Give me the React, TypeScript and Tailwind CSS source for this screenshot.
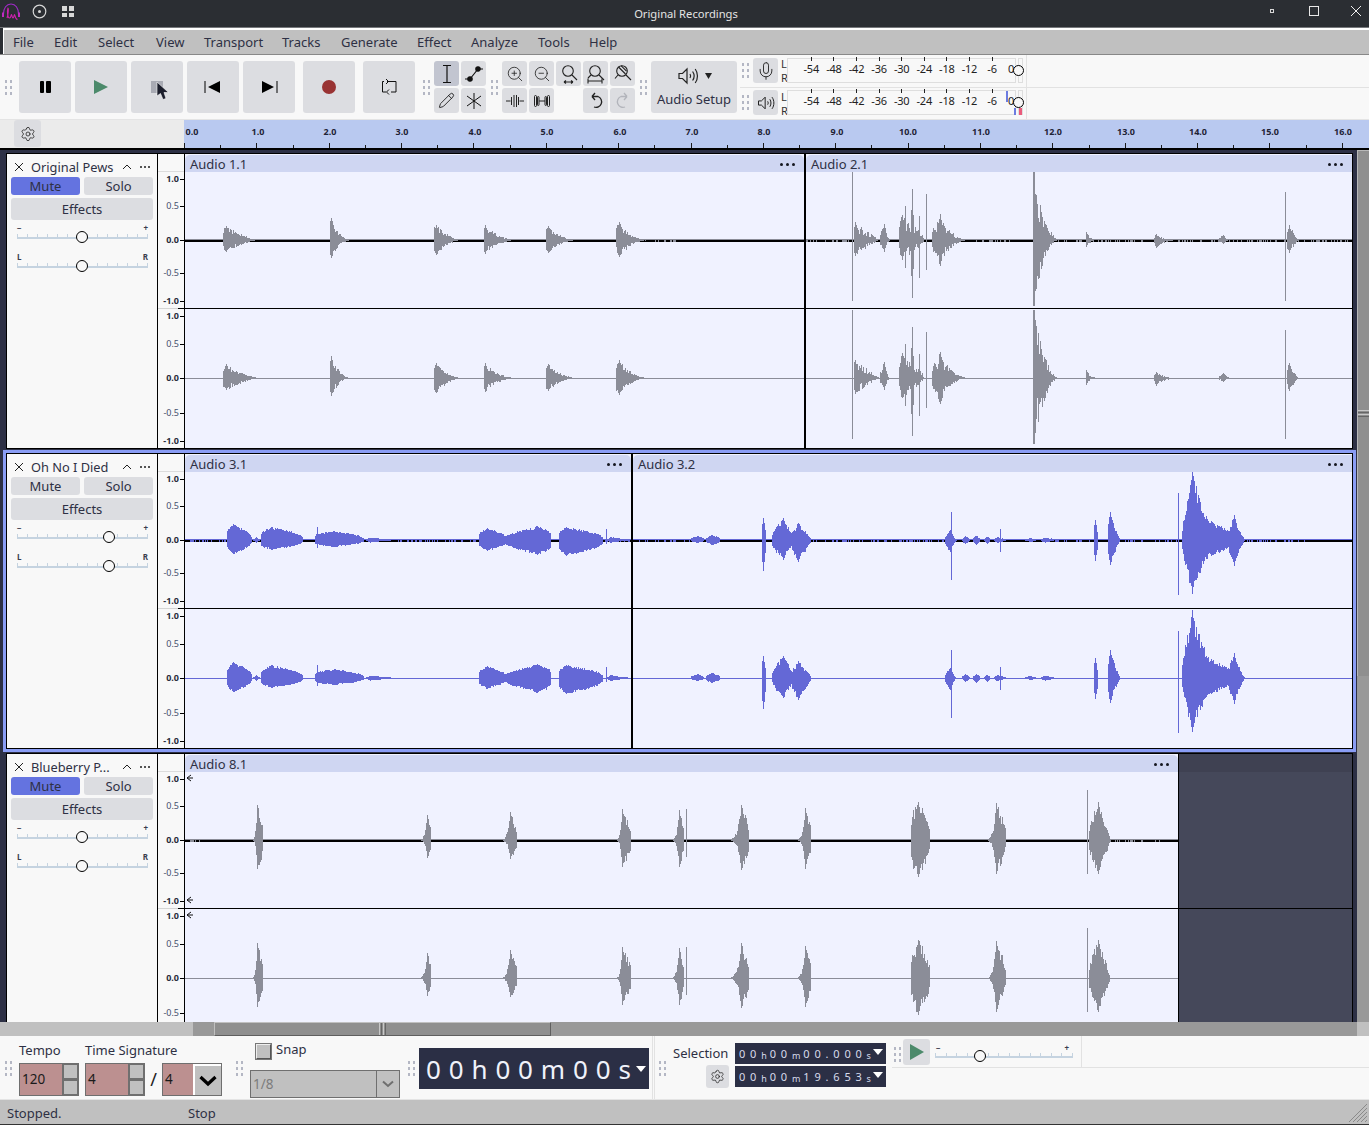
import { Settings, ZoomIn, ZoomOut, Mic, Pencil } from "lucide-react";

type Burst = [number, number, number, number, number, number?, number?];

const GRAY = "#8b8d98";
const BLUE = "#6468d6";

function rnd(n: number) {
  const v = Math.sin(n * 12.9898) * 43758.5453;
  return v - Math.floor(v);
}

function columns(bursts: Burst[], x0: number, x1: number, seed: number, jit: number) {
  let d = "";
  for (let x = x0; x < x1; x++) {
    let up = 0;
    let down = 0;
    for (const [a, p, b, u, dn, pa = 0.5, pd = 1.5] of bursts) {
      if (x < a || x > b) continue;
      let t = 1;
      if (x < p) t = Math.pow((x - a) / (p - a), pa);
      if (x > p) t = Math.pow((b - x) / (b - p), pd);
      // the peak column keeps its full height, the rest gets ragged
      const near = Math.min(1, Math.abs(x - p) / 3);
      const ju = 1 - jit * near * rnd(x * seed + 3);
      const jd = 1 - jit * near * rnd(x * seed + 7);
      up = Math.max(up, u * t * ju);
      down = Math.max(down, dn * t * jd);
    }
    if (up + down > 0.6) d += `M${x + 0.5} ${(-up).toFixed(1)}V${down.toFixed(1)}`;
  }
  return d;
}

function noiseTicks(ranges: [number, number][], seed: number) {
  let d = "";
  for (const [a, b] of ranges) {
    for (let x = a; x < b; x++) {
      if (rnd(x * seed) > 0.66) d += `M${x + 0.5} -1.5V1.5`;
    }
  }
  return d;
}

function Wave(props: {
  x0: number;
  x1: number;
  h: number;
  cy: number;
  color: string;
  bursts: Burst[];
  noise: [number, number][];
  thick: boolean;
  seed: number;
  jit: number;
  arrows?: number[];
}) {
  const { x0, x1, h, cy, color, bursts, noise, thick, seed, jit, arrows } = props;
  const w = x1 - x0;
  return (
    <svg width={w} height={h} viewBox={`${x0} ${-cy} ${w} ${h}`} className="block" shapeRendering="crispEdges">
      {thick ? (
        <>
          <rect x={x0} y={-1.5} width={w} height={1.5} fill={color} />
          <rect x={x0} y={0} width={w} height={1.5} fill="#000" />
          <path d={noiseTicks(noise, seed)} stroke={color} strokeWidth={1} />
        </>
      ) : (
        <rect x={x0} y={-0.5} width={w} height={1} fill={color} />
      )}
      <path d={columns(bursts, x0, x1, seed, jit)} stroke={color} strokeWidth={1} fill="none" />
      {(arrows || []).map((y) => (
        <path
          key={y}
          d={`M${x0 + 6} ${y - cy - 3}L${x0 + 2} ${y - cy}L${x0 + 6} ${y - cy + 3}M${x0 + 2} ${y - cy}H${x0 + 8}`}
          stroke="#111"
          strokeWidth={1}
          fill="none"
          shapeRendering="auto"
        />
      ))}
    </svg>
  );
}

function Grip({ className = "" }: { className?: string }) {
  return (
    <div className={`grid grid-cols-2 content-start gap-x-[3px] gap-y-[3px] w-[7px] h-[15px] self-start shrink-0 ${className}`}>
      {[0, 1, 2, 3, 4, 5].map((i) => (
        <div key={i} className="w-[2px] h-[3px] bg-[#b4b7c4]" />
      ))}
    </div>
  );
}

function BigButton({ children, className = "" }: { children: React.ReactNode; className?: string }) {
  return (
    <div className={`w-[52px] h-[52px] rounded-[3px] bg-[#dcdde1] flex items-center justify-center shrink-0 ${className}`}>
      {children}
    </div>
  );
}

function Tool({ children, active = false }: { children?: React.ReactNode; active?: boolean }) {
  return (
    <div className={`w-[25px] h-[25px] rounded-[3px] flex items-center justify-center ${active ? "bg-[#c2c5d0]" : "bg-[#dcdde1]"}`}>
      {children}
    </div>
  );
}

function Speaker({ size = 24 }: { size?: number }) {
  return (
    <svg width={size} height={size} viewBox="0 0 24 24" fill="none" stroke="#222" strokeWidth="1.2">
      <path d="M3 9.5h3.5L11 5v14l-4.5-4.5H3z" />
      <path d="M14 10c.8 1.2.8 2.8 0 4M16.6 7.5c1.8 2.6 1.8 6.4 0 9M19.2 5c3 4 3 10 0 14" />
    </svg>
  );
}

function ZoomGlyph({ kind }: { kind: string }) {
  return (
    <svg width="22" height="22" viewBox="0 0 22 22" fill="none" stroke="#222" strokeWidth="1.1">
      <circle cx="10" cy="8" r="5.3" />
      <path d="M14 12L19 17" />
      {kind === "fit" && <path d="M6 19h9M6 19l2-1.5M6 19l2 1.500M15 19l-2-1.500M15 19l-2 1.500" />}
      {kind === "sel" && <path d="M3 15.500v5M17 15.500v5M3 18h14M6 12L3 15" />}
      {kind === "toggle" && <path d="M6.500 4l7 7M9 2.700l5.500 5.500M6 12L3 15.500" />}
    </svg>
  );
}

const METER_LABELS = ["-54", "-48", "-42", "-36", "-30", "-24", "-18", "-12", "-6"];

function MeterRow({ icon, playback = false, top }: { icon: React.ReactNode; playback?: boolean; top: string }) {
  return (
    <div className="flex items-start h-[32px]">
      <Grip className={`ml-[2px] ${playback ? "mt-[7px]" : "mt-[8px]"}`} />
      <div className={`ml-[4px] w-[25px] h-[25px] rounded-[3px] bg-[#dcdde1] flex items-center justify-center shrink-0 ${top}`}>
        {icon}
      </div>
      <div className="ml-[3px] mt-[2px] w-[6px] flex flex-col text-[11px] leading-[14px] text-[#333]">
        <span>L</span>
        <span>R</span>
      </div>
      <div className={`relative w-[229px] h-[25px] border border-[#dedede] pl-[12px] flex ${top}`}>
        {METER_LABELS.map((m) => (
          <div key={m} className="w-[22.6px] shrink-0 flex flex-col items-center">
            <div className="w-px h-[4px] bg-[#222] -mt-[2px]" />
            <span className="text-[11px] leading-[14px] mt-[1px] text-[#222] tracking-[-0.2px]">{m}</span>
          </div>
        ))}
        <span className="absolute left-[220px] top-[3px] text-[11px] leading-[14px] text-[#222]">0</span>
        <div className="absolute left-[225px] top-[6px] w-[11px] h-[11px] rounded-full border border-black bg-[#f8f8f8]" />
        {playback && (
          <>
            <div className="absolute left-[218px] top-[0px] w-[2px] h-[11px] bg-[#6c7ce0]" />
            <div className="absolute left-[226px] top-[17px] w-[2px] h-[7px] bg-[#6c7ce0]" />
            <div className="absolute left-[231px] top-[17px] w-[3px] h-[7px] bg-[#ea5c7c]" />
          </>
        )}
      </div>
      <div className={`ml-[2px] w-[5px] h-[25px] border border-[#dedede] ${top}`} />
      <div className="ml-[3px] w-px h-full bg-[#e2e2e2]" />
    </div>
  );
}

function TopToolbar() {
  return (
    <div className="flex h-[65px] bg-[#f8f8f8] border-b border-[#e4e4e4] shrink-0">
      <Grip className="ml-[5px] mt-[25px]" />
      <div className="flex gap-1 ml-[7px] mt-[6px]">
        <BigButton>
          <div className="flex gap-[2px]">
            <div className="w-[4.5px] h-[12px] bg-black rounded-[1px]" />
            <div className="w-[4.5px] h-[12px] bg-black rounded-[1px]" />
          </div>
        </BigButton>
        <BigButton>
          <svg width="16" height="16" viewBox="0 0 16 16"><path d="M1 1L15 8L1 15z" fill="#4c8a6b" /></svg>
        </BigButton>
        <BigButton className="relative">
          <div className="w-[12px] h-[12px] bg-[#a9abb4]" />
          <svg width="14" height="20" viewBox="0 0 14 20" className="absolute left-[25px] top-[20px]">
            <path d="M1 1V15L4.500 12.500L7 18.500L10 17.500L8 11.500H12.500z" fill="#1c1e2c" stroke="#fff" strokeWidth="0.6" />
          </svg>
        </BigButton>
        <BigButton>
          <svg width="18" height="14" viewBox="0 0 18 14"><path d="M1 1V13" stroke="#000" strokeWidth="1" /><path d="M16 1V13L4 7z" fill="#000" /></svg>
        </BigButton>
        <BigButton>
          <svg width="18" height="14" viewBox="0 0 18 14"><path d="M17 1V13" stroke="#000" strokeWidth="1" /><path d="M2 1V13L14 7z" fill="#000" /></svg>
        </BigButton>
      </div>
      <BigButton className="ml-2 mt-[6px]">
        <div className="w-[14px] h-[14px] rounded-full bg-[#993333]" />
      </BigButton>
      <BigButton className="ml-2 mt-[6px]">
        <svg width="18" height="18" viewBox="0 0 18 18" fill="none" stroke="#111" strokeWidth="1">
          <path d="M7 3.500H16V14H11M6 14H2.500V3.500H4" />
          <path d="M6 1L8.500 3.500L6 6M9 11.500L6.500 14L9 16.500" />
        </svg>
      </BigButton>
      <Grip className="ml-2 mt-[25px]" />
      <div className="grid grid-cols-2 gap-[2px] ml-1 mt-[6px] h-[52px]">
        <Tool active>
          <svg width="14" height="20" viewBox="0 0 14 20" fill="none" stroke="#111" strokeWidth="1.2"><path d="M3 1.500H11M3 18.500H11M7 1.500V18.500" /></svg>
        </Tool>
        <Tool>
          <svg width="20" height="16" viewBox="0 0 20 16" fill="none" stroke="#111" strokeWidth="1.2">
            <path d="M1 13H6L14 3H19" />
            <circle cx="6" cy="13" r="2.200" fill="#111" />
            <circle cx="14" cy="3" r="2.200" fill="#111" />
          </svg>
        </Tool>
        <Tool>
          <Pencil size={17} strokeWidth={1.2} color="#111" />
        </Tool>
        <Tool>
          <svg width="18" height="18" viewBox="0 0 18 18" stroke="#111" strokeWidth="1"><path d="M9 1V17M2 4L16 14M16 4L2 14" /></svg>
        </Tool>
      </div>
      <Grip className="ml-[5px] mt-[25px]" />
      <div className="grid grid-cols-5 grid-rows-2 gap-[2px] ml-1 mt-[6px] h-[52px]">
        <Tool><ZoomIn size={18} strokeWidth={1.1} color="#222" /></Tool>
        <Tool><ZoomOut size={18} strokeWidth={1.1} color="#222" /></Tool>
        <Tool><ZoomGlyph kind="fit" /></Tool>
        <Tool><ZoomGlyph kind="sel" /></Tool>
        <Tool><ZoomGlyph kind="toggle" /></Tool>
        <Tool>
          <svg width="20" height="14" viewBox="0 0 20 14" stroke="#222" fill="none" strokeWidth="1"><path d="M1 7H5.500M14.500 7H19" /><path d="M6.500 3V11M9 1V13M11.500 1V13M13.500 3V11" /></svg>
        </Tool>
        <Tool>
          <svg width="20" height="14" viewBox="0 0 20 14" stroke="#222" fill="none" strokeWidth="1"><path d="M7 7H13" /><rect x="2.500" y="1.500" width="2" height="11" rx="1" /><rect x="5.500" y="2.500" width="1.500" height="9" rx="0.7" /><rect x="13" y="2.500" width="1.500" height="9" rx="0.7" /><rect x="15.500" y="1.500" width="2" height="11" rx="1" /></svg>
        </Tool>
        <div />
        <Tool>
          <svg width="20" height="20" viewBox="0 0 20 20" fill="none" stroke="#222" strokeWidth="1.300"><path d="M6 5.500H12A5.500 5.500 0 1 1 8 16M6 5.500L9 2M6 5.500L9 9" /></svg>
        </Tool>
        <Tool>
          <svg width="20" height="20" viewBox="0 0 20 20" fill="none" stroke="#b2b4bb" strokeWidth="1.300"><path d="M14 5.500H8A5.500 5.500 0 1 0 12 16M14 5.500L11 2M14 5.500L11 9" /></svg>
        </Tool>
      </div>
      <Grip className="ml-[5px] mt-[25px]" />
      <div className="ml-1 mt-[6px] w-[86px] h-[52px] rounded-[3px] bg-[#dcdde1] flex flex-col items-center shrink-0">
        <div className="flex items-center mt-[2px] gap-[5px] h-[26px]">
          <Speaker size={24} />
          <svg width="7" height="6" viewBox="0 0 7 6"><path d="M0 0H7L3.500 6z" fill="#222" /></svg>
        </div>
        <span className="text-[13px] leading-[18px] mt-[1px] text-[#2e3044]">Audio Setup</span>
      </div>
      <div className="ml-[3px] flex-1 flex flex-col">
        <div className="border-b border-[#e2e2e2] h-[33px]">
          <MeterRow top="mt-[3px]" icon={<Mic size={20} strokeWidth={1.1} color="#222" />} />
        </div>
        <MeterRow top="mt-[2px]" icon={<Speaker size={20} />} playback />
      </div>
    </div>
  );
}

const TIME_LABELS: [string, number][] = [
  ["0.0", 8], ["1.0", 74], ["2.0", 146], ["3.0", 218], ["4.0", 291], ["5.0", 363], ["6.0", 436], ["7.0", 508],
  ["8.0", 580], ["9.0", 653], ["10.0", 724], ["11.0", 797], ["12.0", 869], ["13.0", 942], ["14.0", 1014], ["15.0", 1086], ["16.0", 1159],
];

function TimeRuler() {
  const ticks = Array.from({ length: 33 }, (_, i) => i);
  return (
    <div className="flex h-[30px] shrink-0 border-b-2 border-black">
      <div className="w-[184px] bg-[#ebebeb] shrink-0 pl-[14px]">
        <div className="w-[27px] h-[27px] rounded-[3px] bg-[#dcdde1] flex items-center justify-center">
          <Settings size={16} strokeWidth={1.2} color="#222" />
        </div>
      </div>
      <div className="relative flex-1 bg-[#b9c9f0] overflow-hidden">
        {TIME_LABELS.map(([t, x]) => (
          <span
            key={t}
            className="absolute top-[5px] -translate-x-1/2 text-[9px] leading-[14px] font-bold text-[#1f2336]"
            style={{ left: x }}
          >
            {t}
          </span>
        ))}
        {ticks.map((i) => (
          <div
            key={i}
            className={`absolute bottom-0 w-px bg-[#1a1a1a] ${i % 2 === 0 ? "h-[5px]" : "h-[3px]"}`}
            style={{ left: Math.round(i * 36.18) }}
          />
        ))}
      </div>
    </div>
  );
}

function Slider({ left, right, pos, className = "" }: { left: string; right: string; pos: number; className?: string }) {
  return (
    <div className={`relative w-[131px] ml-[10px] ${className}`}>
      <div className="flex justify-between text-[8px] leading-[11px] font-bold text-[#3a3c4c]">
        <span>{left}</span>
        <span>{right}</span>
      </div>
      <div className="flex justify-between h-[3px] mt-[1px]">
        {Array.from({ length: 14 }, (_, i) => (
          <div key={i} className="w-px h-full bg-[#c5d3e0]" />
        ))}
      </div>
      <div className="h-[2px] bg-[#c5d3e0]" />
      <div
        className="absolute top-[9px] w-[12px] h-[12px] -ml-[6px] rounded-full border border-black bg-[#f8f8f8]"
        style={{ left: `${pos}%` }}
      />
    </div>
  );
}

function TrackPanel({ name, muted, vol, pan }: { name: string; muted: boolean; vol: number; pan: number }) {
  return (
    <div className="w-[150px] bg-[#f8f8f8] border-r border-black box-content shrink-0 text-[#2e3044] h-full">
      <div className="flex items-center h-[23px] pt-[3px]">
        <svg width="10" height="10" viewBox="0 0 10 10" className="ml-[7px]" stroke="#222" strokeWidth="1"><path d="M1 1L9 9M9 1L1 9" /></svg>
        <span className="ml-[7px] w-[91px] text-[12.800px] leading-[18px] whitespace-nowrap">{name}</span>
        <svg width="10" height="6" viewBox="0 0 10 6" fill="none" stroke="#222" strokeWidth="1"><path d="M1 5L5 1L9 5" /></svg>
        <div className="flex gap-[2px] ml-[8px]">
          <div className="w-[2px] h-[1.5px] bg-[#555]" />
          <div className="w-[2px] h-[1.5px] bg-[#555]" />
          <div className="w-[2px] h-[1.5px] bg-[#555]" />
        </div>
      </div>
      <div className="flex gap-[4px] px-[4px]">
        <div className={`w-[69px] h-[18px] rounded-[3px] text-[13px] leading-[18px] text-center ${muted ? "bg-[#6473e0]" : "bg-[#dcdde1]"}`}>Mute</div>
        <div className="w-[69px] h-[18px] rounded-[3px] bg-[#dcdde1] text-[13px] leading-[18px] text-center">Solo</div>
      </div>
      <div className="mx-[4px] mt-[3px] h-[22px] rounded-[3px] bg-[#dcdde1] text-[13px] leading-[22px] text-center">Effects</div>
      <Slider left="−" right="+" pos={vol} className="mt-[2px]" />
      <Slider left="L" right="R" pos={pan} className="mt-[12px]" />
    </div>
  );
}

const RULER_MARKS: [string, number, boolean][] = [
  ["1.0", 25, true], ["0.5", 52, false], ["0.0", 86, true], ["-0.5", 119, false], ["-1.0", 147, true],
  ["1.0", 162, true], ["0.5", 190, false], ["0.0", 224, true], ["-0.5", 259, false], ["-1.0", 287, true],
];

function VRuler({ visible }: { visible: number }) {
  return (
    <div className="relative w-[26px] bg-[#f8f8f8] border-r border-black box-content shrink-0 h-full">
      <div className="absolute left-0 right-0 top-[17px] h-px bg-[#dcdcdc]" />
      <div className="absolute left-0 right-0 top-[154px] h-px bg-[#d4d4d4]" />
      {RULER_MARKS.slice(0, visible).map(([label, y, bold], i) => (
        <div key={i} className="absolute right-0 flex items-center h-[12px] -mt-[6px]" style={{ top: y }}>
          <span className={`text-[9px] leading-[12px] ${bold ? "font-bold text-[#2b2d3c]" : "text-[#47506e]"}`}>{label}</span>
          <div className="ml-[1px] w-[4px] h-px bg-black" />
        </div>
      ))}
      <div className="absolute right-0 top-[154px] w-[6px] h-px bg-black" />
    </div>
  );
}

type ClipData = {
  title: string;
  x0: number;
  x1: number;
  width: string;
  corners: string;
  bursts: Burst[];
  noise: [number, number][];
  jit: number;
  divider?: boolean;
  arrows?: boolean;
};

function Clip({ clip, color }: { clip: ClipData; color: string }) {
  return (
    <div className={`${clip.width} shrink-0 flex flex-col pt-px bg-[#f0f2ff] ${clip.divider ? "border-r-2 border-black box-content" : ""}`}>
      <div className={`h-[17px] bg-[#cfd6f2] flex items-center justify-between pl-[5px] pr-[9px] ${clip.corners}`}>
        <span className="text-[13px] leading-[17px] pt-[2px] text-[#2e3044]">{clip.title}</span>
        <div className="flex gap-[3px] pt-px">
          <div className="w-[3px] h-[3px] rounded-full bg-[#15161f]" />
          <div className="w-[3px] h-[3px] rounded-full bg-[#15161f]" />
          <div className="w-[3px] h-[3px] rounded-full bg-[#15161f]" />
        </div>
      </div>
      <div className="border-b border-black">
        <Wave x0={clip.x0} x1={clip.x1} h={136} cy={68} color={color} bursts={clip.bursts} noise={clip.noise} jit={clip.jit} thick seed={1.37} arrows={clip.arrows ? [6, 128] : []} />
      </div>
      <Wave x0={clip.x0} x1={clip.x1} h={139} cy={69} color={color} bursts={clip.bursts} noise={[]} jit={clip.jit} thick={false} seed={2.11} arrows={clip.arrows ? [6] : []} />
    </div>
  );
}

function Track({ name, muted, vol, pan, clips, color, fill = false, marks = 10 }: { name: string; muted: boolean; vol: number; pan: number; clips: ClipData[]; color: string; fill?: boolean; marks?: number }) {
  return (
    <div className="flex h-[294px] border border-black box-content bg-[#45485a] shrink-0">
      <TrackPanel name={name} muted={muted} vol={vol} pan={pan} />
      <VRuler visible={marks} />
      <div className="flex flex-1 min-w-0 overflow-hidden">
        {clips.map((c) => (
          <Clip key={c.title} clip={c} color={color} />
        ))}
        {fill && (
          <div className="flex-1 flex flex-col border-l border-black">
            <div className="h-[18px] bg-[#3f4152]" />
            <div className="h-[136px] border-b border-black box-content" />
          </div>
        )}
      </div>
    </div>
  );
}

const PEWS_A: Burst[] = [
  [222, 226, 258, 14, 12, 0.15, 1.3], [329, 331, 353, 22, 18, 0.15, 2.4], [433, 436, 461, 15, 15, 0.15, 1.6], [483, 485, 521, 15, 14, 0.15, 2.4],
  [545, 548, 580, 14, 13, 0.15, 2.2], [615, 619, 654, 18, 17, 0.2, 2.6],
];
const PEWS_B: Burst[] = [
  [852, 852, 852, 68, 61], [853, 855, 879, 18, 16, 0.15, 1], [879, 884, 890, 16, 12], [898, 902, 924, 25, 20, 0.2, 0.7], [910, 912, 914, 51, 58, 0.5, 1],
  [905, 905, 905, 34, 28], [919, 919, 919, 24, 38], [926, 926, 926, 46, 30], [931, 940, 976, 26, 26, 0.5, 3], [1033, 1033, 1033, 68, 66], [1034, 1034, 1034, 68, 66],
  [1032, 1034, 1058, 62, 60, 0.3, 1.6], [1086, 1086, 1100, 8, 7, 1, 3], [1153, 1156, 1178, 6, 8, 0.5, 2], [1218, 1223, 1230, 5, 4], [1285, 1285, 1285, 48, 61], [1286, 1289, 1298, 15, 13, 0.3, 1],
];
const DIED_A: Burst[] = [
  [226, 233, 252, 16, 14, 0.25, 0.45], [252, 256, 260, 3, 3, 1, 1], [260, 271, 303, 13, 10, 0.25, 0.4], [314, 334, 364, 9, 7, 0.2, 0.4], [317, 317, 317, 13, 8],
  [364, 370, 396, 2.500, 2.500, 1, 1], [478, 487, 507, 12, 11, 0.25, 0.45], [500, 537, 551, 14, 15, 0.6, 0.25], [558, 566, 603, 13, 16, 0.25, 0.4],
  [606, 606, 606, 11, 4], [606, 610, 631, 3, 3, 1, 1],
];
const DIED_B: Burst[] = [
  [690, 697, 704, 4, 3, 0.4, 0.4], [705, 712, 720, 5, 5, 0.4, 0.4], [761, 763, 766, 22, 31, 0.4, 0.6], [771, 783, 794, 22, 20, 0.5, 0.7], [790, 798, 811, 17, 22, 0.5, 0.8],
  [951, 951, 951, 28, 40], [944, 950, 957, 10, 12], [961, 965, 970, 4, 4, 0.6, 0.6], [972, 976, 980, 4.500, 4.500, 0.6, 0.6], [983, 987, 990, 3.500, 3.500, 0.6, 0.6], [993, 997, 1006, 3, 3, 0.6, 0.6],
  [1000, 1000, 1000, 11, 12], [1024, 1030, 1036, 2, 2, 0.4, 0.4], [1040, 1045, 1054, 2.500, 2.500, 0.4, 0.4],
  [1093, 1095, 1098, 20, 21, 0.4, 0.6], [1107, 1110, 1120, 28, 25, 0.4, 1.1], [1177, 1178, 1179, 47, 55, 0.4, 0.4], [1181, 1192, 1225, 68, 54, 0.7, 1.7],
  [1198, 1211, 1232, 19, 16, 0.3, 0.4], [1228, 1234, 1245, 25, 26, 0.4, 1.3],
];
const BERRY: Burst[] = [
  [250, 257, 263, 35, 29, 4, 0.35], [416, 427, 431, 25, 18, 4, 0.4], [497, 510, 517, 28, 19, 4, 0.4], [615, 622, 631, 31, 27, 3, 0.4],
  [668, 679, 684, 30, 27, 4, 0.4], [686, 686, 686, 31, 17], [724, 741, 749, 35, 30, 4, 0.4], [793, 805, 811, 32, 29, 4, 0.4],
  [910, 918, 930, 38, 37, 0.25, 0.4], [985, 996, 1006, 37, 34, 3, 0.5], [1087, 1087, 1087, 50, 34], [1088, 1098, 1110, 38, 34, 0.5, 0.8],
];

const TRACK_1: ClipData[] = [
  { title: "Audio 1.1", x0: 185, x1: 804, width: "w-[619px]", corners: "rounded-tl-[5px] rounded-tr-[5px]", bursts: PEWS_A, noise: [[655, 680]], jit: 0.45, divider: true },
  { title: "Audio 2.1", x0: 806, x1: 1352, width: "w-[546px]", corners: "rounded-tl-[5px]", bursts: PEWS_B, noise: [[806, 850], [976, 1010], [1058, 1150], [1178, 1285], [1298, 1352]], jit: 0.6 },
];
const TRACK_2: ClipData[] = [
  { title: "Audio 3.1", x0: 185, x1: 631, width: "w-[446px]", corners: "rounded-tl-[5px] rounded-tr-[5px]", bursts: DIED_A, noise: [[190, 226], [396, 478], [603, 631]], jit: 0.2, divider: true },
  { title: "Audio 3.2", x0: 633, x1: 1352, width: "w-[719px]", corners: "rounded-tl-[5px]", bursts: DIED_B, noise: [[633, 690], [811, 944], [1054, 1093], [1120, 1177], [1245, 1310]], jit: 0.3 },
];
const TRACK_3: ClipData[] = [
  { title: "Audio 8.1", x0: 185, x1: 1178, width: "w-[993px]", corners: "rounded-tl-[5px] rounded-tr-[5px]", bursts: BERRY, noise: [[190, 200], [1110, 1160]], jit: 0.4, arrows: true },
];

function TitleBar() {
  return (
    <div className="relative h-[28px] bg-[#2b2e33] border-b border-[#77797d] flex items-start shrink-0">
      <svg width="20" height="20" viewBox="0 0 20 20" className="ml-[1px] mt-[2px]" fill="none" strokeWidth="1.100">
        <path d="M2.500 12C2.500 6 5.500 2 10 2C14.500 2 17.500 6 17.500 12" stroke="#a02bc8" />
        <path d="M2 10.500V15M18 10.500V15" stroke="#c02bc0" strokeWidth="2" />
        <path d="M6 16C7.500 12 7.500 6 7 6C6 9 6.500 16 8.500 16C10 16 10 12.500 10.500 12.500C11 12.500 11 16 12 16C13 16 13 12.500 13.500 12.500C14 12.500 14 17 16.500 17.500" stroke="#d020b0" />
      </svg>
      <svg width="15" height="15" viewBox="0 0 15 15" className="ml-[11px] mt-[4px]" fill="none">
        <circle cx="7.500" cy="7.500" r="6.300" stroke="#d8d8d8" strokeWidth="1.200" />
        <circle cx="7.500" cy="7.500" r="1.500" fill="#d8d8d8" />
      </svg>
      <div className="ml-[15px] mt-[6px] grid grid-cols-2 gap-[2px] w-[12px]">
        <div className="w-[5px] h-[4.500px] bg-[#d8d8d8]" />
        <div className="w-[5px] h-[4.500px] bg-[#d8d8d8]" />
        <div className="w-[5px] h-[4.500px] bg-[#d8d8d8]" />
        <div className="w-[5px] h-[4.500px] bg-[#d8d8d8]" />
      </div>
      <span className="flex-1 text-center text-[11.200px] leading-[27px] text-[#e4e4e4] translate-x-[14px]">Original Recordings</span>
      <div className="w-[4px] h-[4px] border border-[#d8d8d8] mt-[9px] mr-[35px]" />
      <div className="w-[10px] h-[10px] border border-[#e8e8e8] mt-[6px] mr-[32px]" />
      <svg width="10" height="10" viewBox="0 0 10 10" className="mt-[6px] mr-[8px]" stroke="#eee" strokeWidth="1"><path d="M0 0L10 10M10 0L0 10" /></svg>
    </div>
  );
}

function MenuBar() {
  const items = ["File", "Edit", "Select", "View", "Transport", "Tracks", "Generate", "Effect", "Analyze", "Tools", "Help"];
  return (
    <div className="bg-[#2b2e33] pl-[3px] shrink-0">
      <div className="h-[26px] bg-[#c0c0c0] border-t-2 border-l border-white grid grid-cols-[41px_44px_58px_48px_78px_59px_76px_54px_67px_51px_40px] items-center pl-[9px]">
        {items.map((m) => (
          <span key={m} className="text-[13px] leading-[18px] text-[#2e3044]">{m}</span>
        ))}
      </div>
      <div className="h-px bg-[#888] -ml-[3px]" />
    </div>
  );
}

function Spin() {
  return (
    <div className="w-[16px] h-full bg-[#6f6f6f] flex flex-col gap-[3px] p-[1px] pl-[2px] shrink-0">
      <div className="flex-1 bg-[#c0c0c0]" />
      <div className="flex-1 bg-[#c0c0c0]" />
    </div>
  );
}

function SmallTime({ value }: { value: string }) {
  return (
    <div className="w-[151px] h-[21px] bg-[#2b2f45] flex items-center pl-[4px] relative text-[#d8dcec] text-[11px] leading-[21px] tracking-[4.8px] whitespace-nowrap">
      {value.split("").map((c, i) =>
        c === "h" || c === "m" || c === "s" ? (
          <span key={i} className="text-[9px] pt-[3px] tracking-[3px]">{c}</span>
        ) : (
          <span key={i}>{c}</span>
        )
      )}
      <svg width="10" height="6" viewBox="0 0 10 6" className="absolute right-[3px] top-[6px]"><path d="M0 0H10L5 6z" fill="#fff" /></svg>
    </div>
  );
}

function BottomToolbar() {
  return (
    <div className="flex h-[64px] bg-[#f8f8f8] border-b border-[#e4e4e4] box-border shrink-0">
      <Grip className="ml-[5px] mt-[25px]" />
      <div className="ml-[7px] w-[60px]">
        <div className="text-[13px] leading-[18px] mt-[5px] text-[#2e3044]">Tempo</div>
        <div className="flex h-[33px] mt-[4px] border border-[#6f6f6f] box-border">
          <div className="w-[43px] bg-[#bc9090] text-[13.500px] leading-[31px] pl-[2px] text-[#1a1a1a]">120</div>
          <Spin />
        </div>
      </div>
      <div className="ml-[6px] w-[137px]">
        <div className="text-[13px] leading-[18px] mt-[5px] text-[#2e3044] whitespace-nowrap">Time Signature</div>
        <div className="flex items-start mt-[4px] h-[33px]">
          <div className="flex h-[33px] w-[60px] border border-[#6f6f6f] box-border">
            <div className="flex-1 bg-[#bc9090] text-[13.500px] leading-[31px] pl-[2px] text-[#1a1a1a]">4</div>
            <Spin />
          </div>
          <span className="w-[17px] text-center text-[18px] leading-[33px] text-[#222]">/</span>
          <div className="flex h-[33px] w-[60px] border border-[#6f6f6f] box-border">
            <div className="w-[30px] bg-[#bc9090] text-[13.500px] leading-[31px] pl-[2px] text-[#1a1a1a]">4</div>
            <div className="flex-1 bg-[#c0c0c0] border-l-2 border-t-2 border-white flex items-center justify-center">
              <svg width="18" height="12" viewBox="0 0 18 12" fill="none" stroke="#000" strokeWidth="3.200"><path d="M1.500 2L9 9L16.500 2" /></svg>
            </div>
          </div>
        </div>
      </div>
      <Grip className="ml-[14px] mt-[25px]" />
      <div className="ml-[7px] w-[150px]">
        <div className="flex items-center mt-[6px] h-[18px] pl-[6px]">
          <div className="w-[15px] h-[15px] bg-[#c0c0c0] border border-[#555] border-t-[#eee] border-l-[#eee] shadow-[0_0_0_1px_#777]" />
          <span className="ml-[5px] text-[13px] leading-[18px] -translate-y-[2px] text-[#2e3044]">Snap</span>
        </div>
        <div className="mt-[10px] h-[28px] flex border border-[#6f6f6f] bg-[#c0c0c0]">
          <span className="flex-1 text-[13.500px] leading-[26px] pl-[2px] text-[#7c7c7c]">1/8</span>
          <div className="w-[23px] border-l border-[#6f6f6f] flex items-center justify-center">
            <svg width="12" height="8" viewBox="0 0 12 8" fill="none" stroke="#6f6f6f" strokeWidth="2"><path d="M1 1.500L6 6L11 1.500" /></svg>
          </div>
        </div>
      </div>
      <Grip className="ml-[8px] mt-[25px]" />
      <div className="ml-[4px] mt-[12px] w-[230px] h-[41px] bg-[#2b2f45] relative pl-[7px] text-[26px] leading-[43px] tracking-[0.55px] text-[#f0f2fa] whitespace-nowrap">
        0 0 h 0 0 m 0 0 s
        <svg width="10" height="6" viewBox="0 0 10 6" className="absolute right-[3px] top-[18px]"><path d="M0 0H10L5 6z" fill="#fff" /></svg>
      </div>
      <div className="ml-[3px] w-[3px] h-full border-x border-[#e2e2e2]" />
      <Grip className="ml-[4px] mt-[25px]" />
      <div className="ml-[7px] w-[56px] flex flex-col items-start">
        <span className="text-[13px] leading-[18px] mt-[8px] text-[#2e3044]">Selection</span>
        <div className="ml-[33px] mt-[3px] w-[23px] h-[23px] rounded-[3px] bg-[#dcdde1] flex items-center justify-center">
          <Settings size={15} strokeWidth={1.2} color="#222" />
        </div>
      </div>
      <div className="ml-[6px] mt-[7px] flex flex-col gap-[2px]">
        <SmallTime value="00h00m00.000s" />
        <SmallTime value="00h00m19.653s" />
      </div>
      <div className="ml-[6px] flex-1 flex flex-col">
        <div className="h-[32px] border-b border-[#e2e2e2] flex items-start">
          <Grip className="ml-[2px] mt-[11px]" />
          <div className="ml-[2px] mt-[3px] w-[27px] h-[26px] rounded-[3px] bg-[#dcdde1] flex items-center justify-center">
            <svg width="16" height="18" viewBox="0 0 16 18"><path d="M1 1L15 9L1 17z" fill="#4c8a6b" /></svg>
          </div>
          <div className="relative ml-[5px] w-[138px] mt-[7px]">
            <div className="flex justify-between text-[8px] leading-[9px] font-bold text-[#3a3c4c] px-[1px] pr-[4px]">
              <span>−</span>
              <span>+</span>
            </div>
            <div className="flex justify-between h-[3px] mt-[1px]">
              {Array.from({ length: 14 }, (_, i) => (
                <div key={i} className="w-px h-full bg-[#c5d3e0]" />
              ))}
            </div>
            <div className="h-[2px] bg-[#c5d3e0]" />
            <div className="absolute left-[39px] top-[7px] w-[12px] h-[12px] rounded-full border border-black bg-[#f8f8f8]" />
          </div>
          <div className="ml-[8px] w-px h-full bg-[#e2e2e2]" />
        </div>
      </div>
    </div>
  );
}

export default function App() {
  return (
    <div className="w-[1369px] h-[1125px] flex flex-col overflow-hidden font-['Noto_Sans',sans-serif] bg-[#f8f8f8]">
      <TitleBar />
      <MenuBar />
      <TopToolbar />
      <TimeRuler />

      {/* Tracks and the vertical scrollbar */}
      <div className="h-[872px] flex shrink-0">
        <div className="w-[1357px] bg-[#2d3045] pl-[6px] pr-[4px] pt-[3px] overflow-hidden flex flex-col shrink-0">
          <Track name="Original Pews" muted vol={49.5} pan={49.5} clips={TRACK_1} color={GRAY} />
          <div className="mt-px -mx-[3px] border-[3px] border-[#8a9df5] shrink-0">
            <Track name="Oh No I Died" muted={false} vol={70} pan={70} clips={TRACK_2} color={BLUE} />
          </div>
          <div className="mt-px">
            <Track name="Blueberry P..." muted vol={49.5} pan={49.5} clips={TRACK_3} color={GRAY} fill marks={9} />
          </div>
        </div>
        <div className="flex-1 bg-[#999999]">
          <div className="h-[526px] bg-[#8f8f8f] border-l border-t border-[#b8b8b8] flex flex-col items-center justify-center gap-px">
            <div className="w-full h-px bg-[#c8c8c8]" />
            <div className="w-full h-px bg-[#666]" />
            <div className="w-full h-px bg-[#c8c8c8]" />
            <div className="w-full h-px bg-[#666]" />
          </div>
        </div>
      </div>

      {/* Horizontal scrollbar */}
      <div className="h-[14px] flex shrink-0">
        <div className="w-[193px] bg-[#c0c0c0]" />
        <div className="w-[1164px] bg-[#999999] pl-[21px]">
          <div className="w-[337px] h-full bg-[#8f8f8f] border border-[#5f5f5f] border-t-[#c0c0c0] border-l-[#c0c0c0] flex items-center justify-center gap-px">
            <div className="w-px h-full bg-[#c8c8c8]" />
            <div className="w-px h-full bg-[#666]" />
            <div className="w-px h-full bg-[#c8c8c8]" />
            <div className="w-px h-full bg-[#666]" />
          </div>
        </div>
        <div className="flex-1 bg-[#c0c0c0]" />
      </div>

      <BottomToolbar />

      {/* Status bar */}
      <div className="relative flex-1 bg-[#c0c0c0] border-b border-[#333] flex items-center pt-[3px] text-[13px] text-[#2e3044]">
        <span className="ml-[7px] w-[181px]">Stopped.</span>
        <span>Stop</span>
        <svg width="20" height="20" viewBox="0 0 20 20" className="absolute right-[1px] bottom-[1px]" stroke="#8a8a8a" strokeWidth="1">
          <path d="M1 19L19 1M5 19L19 5M9 19L19 9M13 19L19 13M17 19L19 17" />
        </svg>
      </div>
    </div>
  );
}
